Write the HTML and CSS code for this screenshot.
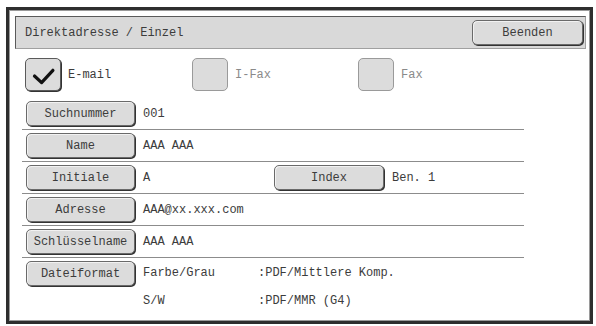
FILE: index.html
```html
<!DOCTYPE html>
<html lang="de">
<head>
  <meta charset="UTF-8" />
  <title>Direktadresse / Einzel</title>
  <link rel="stylesheet" href="styles.css">
</head>
<body>
  <div class="frame">
    <div class="title-bar">
      <span class="title">Direktadresse / Einzel</span>
      <button class="btn btn-close">Beenden</button>
    </div>

    <div class="check-row">
      <div class="check-item">
        <span class="checkbox">
          <svg width="36" height="33" viewBox="0 0 36 33"><path d="M9 17 L16.5 24 L28.5 11" fill="none" stroke="#111" stroke-width="3.4" stroke-linecap="round" stroke-linejoin="round"/></svg>
        </span>
        <span class="check-label">E-mail</span>
      </div>
      <div class="check-item disabled">
        <span class="checkbox"></span>
        <span class="check-label">I-Fax</span>
      </div>
      <div class="check-item disabled">
        <span class="checkbox"></span>
        <span class="check-label">Fax</span>
      </div>
    </div>

    <div class="rows">
      <div class="row">
        <button class="btn btn-field">Suchnummer</button>
        <span class="value">001</span>
      </div>
      <div class="row">
        <button class="btn btn-field">Name</button>
        <span class="value">AAA AAA</span>
      </div>
      <div class="row">
        <button class="btn btn-field">Initiale</button>
        <span class="value value-short">A</span>
        <button class="btn btn-field btn-index">Index</button>
        <span class="value">Ben. 1</span>
      </div>
      <div class="row">
        <button class="btn btn-field">Adresse</button>
        <span class="value">AAA@xx.xxx.com</span>
      </div>
      <div class="row">
        <button class="btn btn-field">Schlüsselname</button>
        <span class="value">AAA AAA</span>
      </div>
      <div class="row row-last">
        <button class="btn btn-field">Dateiformat</button>
        <div class="formats">
          <span>Farbe/Grau</span><span>:PDF/Mittlere Komp.</span>
          <span>S/W</span><span>:PDF/MMR (G4)</span>
        </div>
      </div>
    </div>
  </div>
</body>
</html>
```

FILE: styles.css
```css
body {
  margin: 0;
  background: #ffffff;
  font-family: "Liberation Mono", "Courier New", monospace;
  font-size: 12px;
  color: #3c3c3c;
}
.frame {
  box-sizing: border-box;
  width: 587px; height: 317px;
  margin: 7px 0 0 6px;
  border: 3px solid #2e2e2e;
  box-shadow: inset 0 0 0 1px #9a9a9a;
}
.title-bar {
  box-sizing: border-box;
  height: 33px;
  margin: 6px 4px 0 6px;
  display: flex; align-items: center; justify-content: space-between;
  padding: 0 2px 0 9px;
  background: #d9d9d9;
  border: 1px solid #5a5a5a;
  border-bottom-color: #a0a0a0;
  border-right-color: #a0a0a0;
}
.btn {
  box-sizing: border-box;
  height: 25px;
  padding: 0;
  font: inherit;
  color: #3c3c3c;
  background: #dcdcdc;
  border: 1px solid #6a6a6a;
  border-radius: 5px;
  box-shadow: 1px 1px 0 #333, inset 1px 1px 0 #f2f2f2;
  text-align: center;
}
.btn-close { width: 111px; }
.btn-field { width: 109px; flex: none; }
.btn-index { width: 110px; }

.check-row {
  display: grid;
  grid-template-columns: 167px 166px auto;
  margin: 9px 0 0 16px;
}
.check-item { display: flex; align-items: center; gap: 7px; }
.checkbox {
  box-sizing: border-box;
  width: 36px; height: 33px;
  background: #dcdcdc;
  border: 1px solid #5a5a5a;
  border-radius: 5px;
  box-shadow: 1px 1px 0 #333;
  display: flex;
}
.check-item.disabled .checkbox {
  border-color: #9a9a9a;
  box-shadow: none;
}
.check-item.disabled .check-label { color: #8a8a8a; }

.rows {
  width: 502px;
  margin: 7px 0 0 13px;
}
.row {
  display: flex; align-items: center;
  height: 32px;
  box-sizing: border-box;
  padding: 3px 0 3px 4px;
  border-bottom: 1px solid #8c8c8c;
}
.row .value { margin-left: 8px; }
.row .value-short { width: 131px; }
.row-last { border-bottom: none; align-items: flex-start; }
.formats {
  display: grid;
  grid-template-columns: 115px auto;
  grid-auto-rows: 28px;
  align-items: center;
  margin: -2px 0 0 8px;
}
```
